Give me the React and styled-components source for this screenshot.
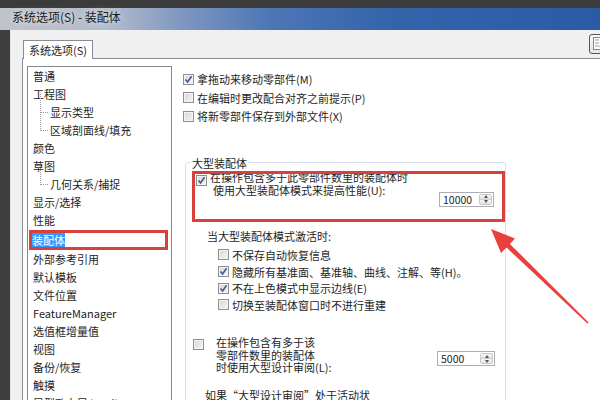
import React from "react";
import styled, { createGlobalStyle } from "styled-components";

const GlobalStyle = createGlobalStyle`
  html, body { margin: 0; padding: 0; background: #3b3b3b; }
  body { font-family: "Noto Sans CJK SC", "Noto Sans", sans-serif; color: #1e1e1e; }
  * { box-sizing: border-box; }
`;

const Screen = styled.div`
  width: 600px;
  height: 400px;
  overflow: hidden;
  position: relative;
  background: #3b3b3b;
  padding-top: 8px;
  display: flex;
  flex-direction: column;
`;

const TitleBar = styled.div`
  height: 22px;
  flex: none;
  display: flex;
  align-items: flex-start;
  padding: 0 0 0 12px;
  font-size: 12px;
  line-height: 17px;
  color: #1b1b1b;
  text-shadow: 0 0 6px rgba(255, 255, 255, 0.8);
  background: linear-gradient(
    90deg,
    #bfc3cb 0%,
    #b3bccb 18%,
    #7f98c0 30%,
    #4d76b6 45%,
    #3564ab 65%,
    #2c5ba6 100%
  );
`;

const BodyRow = styled.div`
  flex: 1;
  display: flex;
  min-height: 0;
`;

const DarkEdge = styled.div`
  width: 10px;
  flex: none;
  background: #3e3e3e;
`;

const Dialog = styled.div`
  flex: 1;
  min-width: 0;
  background: #f0f0f0;
  border-left: 1px solid #dfe4ea;
  padding-left: 11px;
  display: flex;
  flex-direction: column;
`;

const TabStrip = styled.div`
  height: 28px;
  flex: none;
  display: flex;
  align-items: flex-end;
  padding-left: 1px;
`;

const Tab = styled.div`
  height: 19px;
  padding: 0 5px;
  margin-bottom: -1px;
  border: 1px solid #898c95;
  border-bottom: none;
  background: #fff;
  font-size: 11px;
  line-height: 18px;
  position: relative;
  z-index: 1;
`;

const ToolButton = styled.div`
  margin-left: auto;
  margin-right: -13px;
  align-self: flex-start;
  margin-top: 4px;
  width: 24px;
  height: 20px;
  border: 1px solid #555;
  border-radius: 3px;
  background: linear-gradient(#fafafa, #e4e4e4);
  display: flex;
  align-items: center;
  padding-left: 3px;
`;

const Panel = styled.div`
  flex: 1;
  min-height: 0;
  background: #fff;
  border-top: 1px solid #898c95;
  border-left: 1px solid #898c95;
  padding: 7px 0 0 4px;
  display: flex;
  align-items: flex-start;
`;

const Tree = styled.div`
  width: 145px;
  height: 400px;
  flex: none;
  border: 1px solid #828790;
  background: #fff;
  padding-top: 0;
`;

const TreeRow = styled.div`
  position: relative;
  height: 18px;
  line-height: 18px;
  font-size: 11px;
  white-space: nowrap;
  padding-left: ${(p) => (p.$child ? 22 : 5)}px;
  ${(p) =>
    p.$child &&
    `
    &::before {
      content: "";
      position: absolute;
      left: 12px;
      top: -9px;
      width: 7px;
      height: 18px;
      border-left: 1px dotted #9a9a9a;
      border-bottom: 1px dotted #9a9a9a;
    }
  `}
  ${(p) =>
    p.$marked &&
    `
    margin: 1px 3px 0 1px;
    height: 20px;
    line-height: 18px;
    padding-left: 3px;
    padding-top: 1px;
    outline: 3px solid #d8403c;
    outline-offset: -3px;
  `}
`;

const Selected = styled.span`
  background: #3399ff;
  color: #fff;
  padding: 1px 0;
`;

const Right = styled.div`
  flex: 1;
  min-width: 0;
  padding: 4px 0 0 11px;
  display: flex;
  flex-direction: column;
`;

const OptionRow = styled.div`
  height: ${(p) => p.$h || 18.5}px;
  display: flex;
  align-items: center;
  gap: 3px;
  font-size: 11px;
  white-space: nowrap;
`;

const Box = styled.span`
  width: 11px;
  height: 11px;
  flex: none;
  border: 1px solid #8e8f8f;
  background: linear-gradient(135deg, #d6d6d6, #f7f7f7);
  box-shadow: inset 0 0 0 1px #f4f4f4;
  display: flex;
  align-items: center;
  justify-content: center;
`;

function Check({ checked, style }) {
  return (
    <Box style={style}>
      {checked && (
        <svg width="9" height="9" viewBox="0 0 9 9">
          <path d="M1.5 4.5 L3.6 7 L7.6 1.3" fill="none" stroke="#3b5a99" strokeWidth="1.6" />
        </svg>
      )}
    </Box>
  );
}

const Group = styled.fieldset`
  width: 321px;
  margin: 30px 0 0 2px;
  padding: 1px 0 0 6px;
  border: 1px solid #d5dfe5;
  border-radius: 3px;
  min-width: 0;
  height: 400px;
`;

const Legend = styled.legend`
  font-size: 11px;
  line-height: 14px;
  padding: 0 1px;
  margin-left: -1px;
`;

const LargeBlock = styled.div`
  height: 51px;
  display: flex;
  align-items: flex-start;
  outline: 3px solid #d8403c;
  outline-offset: -3px;
`;

const MultiText = styled.div`
  flex: 1;
  font-size: 11px;
  line-height: ${(p) => p.$lh || 13}px;
  white-space: nowrap;
  margin-left: ${(p) => p.$ml || 3}px;
`;

const Indented = styled.div`
  padding-left: ${(p) => p.$pl || 0}px;
`;

const Spin = styled.div`
  width: ${(p) => p.$w || 55}px;
  height: 15px;
  flex: none;
  margin-top: ${(p) => p.$mt}px;
  margin-right: ${(p) => p.$mr}px;
  border: 1px solid #abadb3;
  background: #fff;
  display: flex;
`;

const SpinValue = styled.div`
  flex: 1;
  font-size: 10.5px;
  line-height: 13px;
  padding-left: 3px;
`;

const SpinArrows = styled.div`
  width: 13px;
  margin: 1px 1px 1px 0;
  display: flex;
  flex-direction: column;
  border: 1px solid #c9c9c9;
  border-radius: 2px;
`;

const SpinHalf = styled.div`
  flex: 1;
  background: linear-gradient(#f6f6f6, #e2e2e2);
  display: flex;
  align-items: center;
  justify-content: center;
  & + & { border-top: 1px solid #cfcfcf; }
  &::after {
    content: "";
    border-left: 2.5px solid transparent;
    border-right: 2.5px solid transparent;
    ${(p) => (p.$down ? "border-top: 3px solid #555;" : "border-bottom: 3px solid #555;")}
  }
`;

function SpinBox({ value, w, mt, mr }) {
  return (
    <Spin $w={w} $mt={mt} $mr={mr}>
      <SpinValue>{value}</SpinValue>
      <SpinArrows>
        <SpinHalf />
        <SpinHalf $down />
      </SpinArrows>
    </Spin>
  );
}

const ActiveLabel = styled.div`
  margin: 6px 0 0 15px;
  font-size: 11px;
  line-height: 16px;
  white-space: nowrap;
`;

const SubList = styled.div`
  margin: 3px 0 0 26px;
  display: flex;
  flex-direction: column;
`;

const BottomBlock = styled.div`
  margin: 23px 0 0 1px;
  display: flex;
  align-items: flex-start;
`;

const Footer = styled.div`
  margin: 14px 0 0 13px;
  font-size: 11px;
  line-height: 14px;
  white-space: nowrap;
`;

const ArrowLayer = styled.svg`
  position: absolute;
  left: 0;
  top: 0;
  pointer-events: none;
`;

const treeItems = [
  { t: "普通" },
  { t: "工程图" },
  { t: "显示类型", child: true },
  { t: "区域剖面线/填充", child: true },
  { t: "颜色" },
  { t: "草图" },
  { t: "几何关系/捕捉", child: true },
  { t: "显示/选择" },
  { t: "性能" },
  { t: "装配体", selected: true },
  { t: "外部参考引用" },
  { t: "默认模板" },
  { t: "文件位置" },
  { t: "FeatureManager" },
  { t: "选值框增量值" },
  { t: "视图" },
  { t: "备份/恢复" },
  { t: "触摸" },
  { t: "异型孔向导/Toolbox" },
];

const topOptions = [
  { t: "拿拖动来移动零部件(M)", c: true },
  { t: "在编辑时更改配合对齐之前提示(P)", c: false },
  { t: "将新零部件保存到外部文件(X)", c: false },
];

const subOptions = [
  { t: "不保存自动恢复信息", c: false },
  { t: "隐藏所有基准面、基准轴、曲线、注解、等(H)。", c: true },
  { t: "不在上色模式中显示边线(E)", c: true },
  { t: "切换至装配体窗口时不进行重建", c: false },
];

export default function App() {
  return (
    <Screen>
      <GlobalStyle />
      <TitleBar>系统选项(S) - 装配体</TitleBar>
      <BodyRow>
        <DarkEdge />
        <Dialog>
          <TabStrip>
            <Tab>系统选项(S)</Tab>
            <ToolButton>
              <svg width="16" height="14" viewBox="0 0 16 14">
                <rect x="0.5" y="0.5" width="13" height="12" fill="#fff" stroke="#7a8a9a" />
                <path d="M2 3h4M2 6h4M2 9h4M8 3h4M8 6h4" stroke="#8aa0b8" strokeWidth="1" />
                <path d="M7 9 L9 11.5 L13 6" fill="none" stroke="#2e9a3e" strokeWidth="1.8" />
              </svg>
            </ToolButton>
          </TabStrip>
          <Panel>
            <Tree>
              {treeItems.map((it) => (
                <TreeRow key={it.t} $child={it.child} $marked={it.selected}>
                  {it.selected ? <Selected>{it.t}</Selected> : it.t}
                </TreeRow>
              ))}
            </Tree>
            <Right>
              {topOptions.map((o) => (
                <OptionRow key={o.t}>
                  <Check checked={o.c} />
                  {o.t}
                </OptionRow>
              ))}
              <Group>
                <Legend>大型装配体</Legend>
                <LargeBlock>
                  <Check checked style={{ marginLeft: 4, marginTop: 4 }} />
                  <MultiText>
                    <div>在操作包含多于此零部件数里的装配体时</div>
                    <Indented $pl={3}>使用大型装配体模式来提高性能(U):</Indented>
                  </MultiText>
                  <SpinBox value="10000" w={55} mt={21} mr={11} />
                </LargeBlock>
                <ActiveLabel>当大型装配体模式激活时:</ActiveLabel>
                <SubList>
                  {subOptions.map((o) => (
                    <OptionRow key={o.t} $h={16.7}>
                      <Check checked={o.c} />
                      {o.t}
                    </OptionRow>
                  ))}
                </SubList>
                <BottomBlock>
                  <Check style={{ marginTop: 3 }} />
                  <MultiText $ml={12} $lh={12.5}>
                    <div>在操作包含有多于该</div>
                    <div>零部件数里的装配体</div>
                    <div>时使用大型设计审阅(L):</div>
                  </MultiText>
                  <SpinBox value="5000" w={58} mt={15} mr={10} />
                </BottomBlock>
                <Footer>如果“大型设计审阅”处于活动状</Footer>
              </Group>
            </Right>
          </Panel>
        </Dialog>
      </BodyRow>
      <ArrowLayer width="600" height="400" viewBox="0 0 600 400">
        <polygon
          points="491,229 515,238.5 509.9,243.9 588.6,322.4 587.4,323.6 506.5,247.5 501,253"
          fill="#e8403c"
        />
      </ArrowLayer>
    </Screen>
  );
}
